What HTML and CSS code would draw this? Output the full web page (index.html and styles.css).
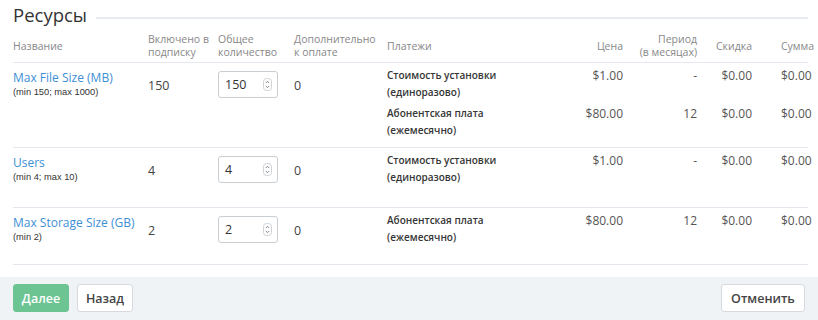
FILE: index.html
```html
<!DOCTYPE html>
<html lang="ru">
<head>
<meta charset="utf-8">
<title>Ресурсы</title>
<link rel="stylesheet" href="styles.css">
</head>
<body>
<div class="page">
  <div class="legend">
    <h2 class="legend-title">Ресурсы</h2>
    <span class="legend-line"></span>
  </div>
  <table class="res">
    <colgroup>
      <col class="c-name"><col class="c-incl"><col class="c-total"><col class="c-extra"><col class="c-pay"><col class="c-price"><col class="c-period"><col class="c-disc"><col class="c-sum">
    </colgroup>
    <thead>
      <tr>
        <th>Название</th>
        <th>Включено в подписку</th>
        <th>Общее количество</th>
        <th>Дополнительно к оплате</th>
        <th>Платежи</th>
        <th class="r price">Цена</th>
        <th class="r period">Период<br>(в месяцах)</th>
        <th class="r">Скидка</th>
        <th class="l2">Сумма</th>
      </tr>
    </thead>
    <tbody>
      <tr>
        <td class="name"><a href="#" class="link">Max File Size (MB)</a><div class="sub">(min 150; max 1000)</div></td>
        <td class="num">150</td>
        <td class="inp"><div class="numbox"><span>150</span><svg class="spin" width="9" height="13" viewBox="0 0 9 13"><rect x="0.5" y="0.5" width="8" height="12" rx="3" fill="#fff" stroke="#cfd3d7"/><path d="M2.8 5 L4.5 3.3 L6.2 5" fill="none" stroke="#777" stroke-width="0.9"/><path d="M2.8 8 L4.5 9.7 L6.2 8" fill="none" stroke="#777" stroke-width="0.9"/></svg></div></td>
        <td class="num">0</td>
        <td class="pay"><div class="item">Стоимость установки<br>(единоразово)</div><div class="item">Абонентская плата<br>(ежемесячно)</div></td>
        <td class="val r price"><div class="item">$1.00</div><div class="item">$80.00</div></td>
        <td class="val r period"><div class="item">-</div><div class="item">12</div></td>
        <td class="val r"><div class="item">$0.00</div><div class="item">$0.00</div></td>
        <td class="val l2"><div class="item">$0.00</div><div class="item">$0.00</div></td>
      </tr>
      <tr>
        <td class="name"><a href="#" class="link">Users</a><div class="sub">(min 4; max 10)</div></td>
        <td class="num">4</td>
        <td class="inp"><div class="numbox"><span>4</span><svg class="spin" width="9" height="13" viewBox="0 0 9 13"><rect x="0.5" y="0.5" width="8" height="12" rx="3" fill="#fff" stroke="#cfd3d7"/><path d="M2.8 5 L4.5 3.3 L6.2 5" fill="none" stroke="#777" stroke-width="0.9"/><path d="M2.8 8 L4.5 9.7 L6.2 8" fill="none" stroke="#777" stroke-width="0.9"/></svg></div></td>
        <td class="num">0</td>
        <td class="pay"><div class="item">Стоимость установки<br>(единоразово)</div></td>
        <td class="val r price"><div class="item">$1.00</div></td>
        <td class="val r period"><div class="item">-</div></td>
        <td class="val r"><div class="item">$0.00</div></td>
        <td class="val l2"><div class="item">$0.00</div></td>
      </tr>
      <tr>
        <td class="name"><a href="#" class="link">Max Storage Size (GB)</a><div class="sub">(min 2)</div></td>
        <td class="num">2</td>
        <td class="inp inp-last"><div class="numbox"><span>2</span><svg class="spin" width="9" height="13" viewBox="0 0 9 13"><rect x="0.5" y="0.5" width="8" height="12" rx="3" fill="#fff" stroke="#cfd3d7"/><path d="M2.8 5 L4.5 3.3 L6.2 5" fill="none" stroke="#777" stroke-width="0.9"/><path d="M2.8 8 L4.5 9.7 L6.2 8" fill="none" stroke="#777" stroke-width="0.9"/></svg></div></td>
        <td class="num">0</td>
        <td class="pay"><div class="item">Абонентская плата<br>(ежемесячно)</div></td>
        <td class="val r price"><div class="item">$80.00</div></td>
        <td class="val r period"><div class="item">12</div></td>
        <td class="val r"><div class="item">$0.00</div></td>
        <td class="val l2"><div class="item">$0.00</div></td>
      </tr>
    </tbody>
  </table>
</div>
<div class="footer">
  <div class="btns">
    <button class="btn btn-primary">Далее</button>
    <button class="btn">Назад</button>
  </div>
  <button class="btn btn-cancel">Отменить</button>
</div>
</body>
</html>
```
FILE: styles.css
```css
html, body {
  margin: 0;
  padding: 0;
  background: #fff;
}
body {
  font-family: "Open Sans", "Noto Sans", sans-serif;
  color: #444;
  width: 818px;
  height: 320px;
  overflow: hidden;
  display: flex;
  flex-direction: column;
}
.page {
  padding: 0 10px 0 13px;
  flex: 1;
}
.legend {
  display: flex;
  align-items: flex-start;
  height: 31px;
  gap: 9px;
}
.legend-title {
  margin: 0;
  font-size: 18.5px;
  font-weight: 400;
  line-height: 24px;
  color: #333;
  padding-top: 3px;
}
.legend-line {
  flex: 1;
  height: 2px;
  background: #e8ecf1;
  margin-top: 17px;
}
.res {
  table-layout: fixed;
  width: 795px;
  border-collapse: collapse;
}
.c-name { width: 135px; }
.c-incl { width: 70px; }
.c-total { width: 76px; }
.c-extra { width: 93px; }
.c-pay { width: 170px; }
.c-price { width: 74px; }
.c-period { width: 73px; }
.c-disc { width: 76px; }
.c-sum { width: 28px; }
th {
  font-size: 10.5px;
  font-weight: 400;
  color: #888;
  text-align: left;
  line-height: 13px;
  padding: 2px 6px 3px 0;
  vertical-align: middle;
}
thead tr {
  border-bottom: 1px solid #e4e8ee;
}
tbody tr {
  border-bottom: 1px solid #e4e8ee;
}
td {
  vertical-align: top;
  padding: 0 6px 0 0;
  white-space: nowrap;
}
th.r, td.r { text-align: right; padding-right: 28px; }
th.price, td.price { padding-right: 8px; }
th.period, td.period { padding-right: 7px; }
th.l2, td.l2 { padding-left: 1px; padding-right: 0; white-space: nowrap; }
.name {
  padding-top: 6px;
}
.link {
  display: block;
  color: #3d8fd5;
  text-decoration: none;
  font-size: 12px;
  line-height: 17px;
}
.sub {
  font-family: "Liberation Sans", Arial, sans-serif;
  font-size: 9.3px;
  line-height: 12px;
  color: #333;
}
.num {
  padding-top: 8px;
  font-size: 12.5px;
  line-height: 29px;
  color: #444;
}
.inp {
  padding: 8px 0 24px 0;
}
.inp-last {
  padding-bottom: 21px;
}
.numbox {
  box-sizing: border-box;
  width: 60px;
  height: 27px;
  border: 1px solid #c9ced3;
  border-radius: 3px;
  display: flex;
  align-items: center;
  justify-content: space-between;
  padding: 0 5px 0 6px;
  font-size: 12.5px;
  color: #333;
  background: #fff;
}
.pay {
  padding: 4px 6px 4px 0;
  font-size: 10px;
  font-weight: 600;
  color: #363636;
}
.pay .item {
  line-height: 17px;
  margin-bottom: 4px;
}
.val {
  padding-top: 4px;
  font-size: 12px;
  color: #555;
}
.val .item {
  height: 34px;
  line-height: 17px;
  margin-bottom: 4px;
}
.footer {
  background: #f0f3f6;
  height: 43px;
  box-sizing: border-box;
  padding: 7px 13px 8px 13px;
  display: flex;
  justify-content: space-between;
  align-items: center;
}
.btns {
  display: flex;
  gap: 8px;
}
.btn {
  font-family: "Open Sans", "Noto Sans", sans-serif;
  font-size: 12.5px;
  font-weight: 600;
  height: 28px;
  padding: 0 6px;
  border: 1px solid #d6dadf;
  background: #fff;
  color: #444;
  border-radius: 3px;
  min-width: 56px;
}
.btn-primary {
  background: #6cc493;
  border-color: #6cc493;
  color: #fff;
}
.btn-cancel {
  width: 84px;
}
```
